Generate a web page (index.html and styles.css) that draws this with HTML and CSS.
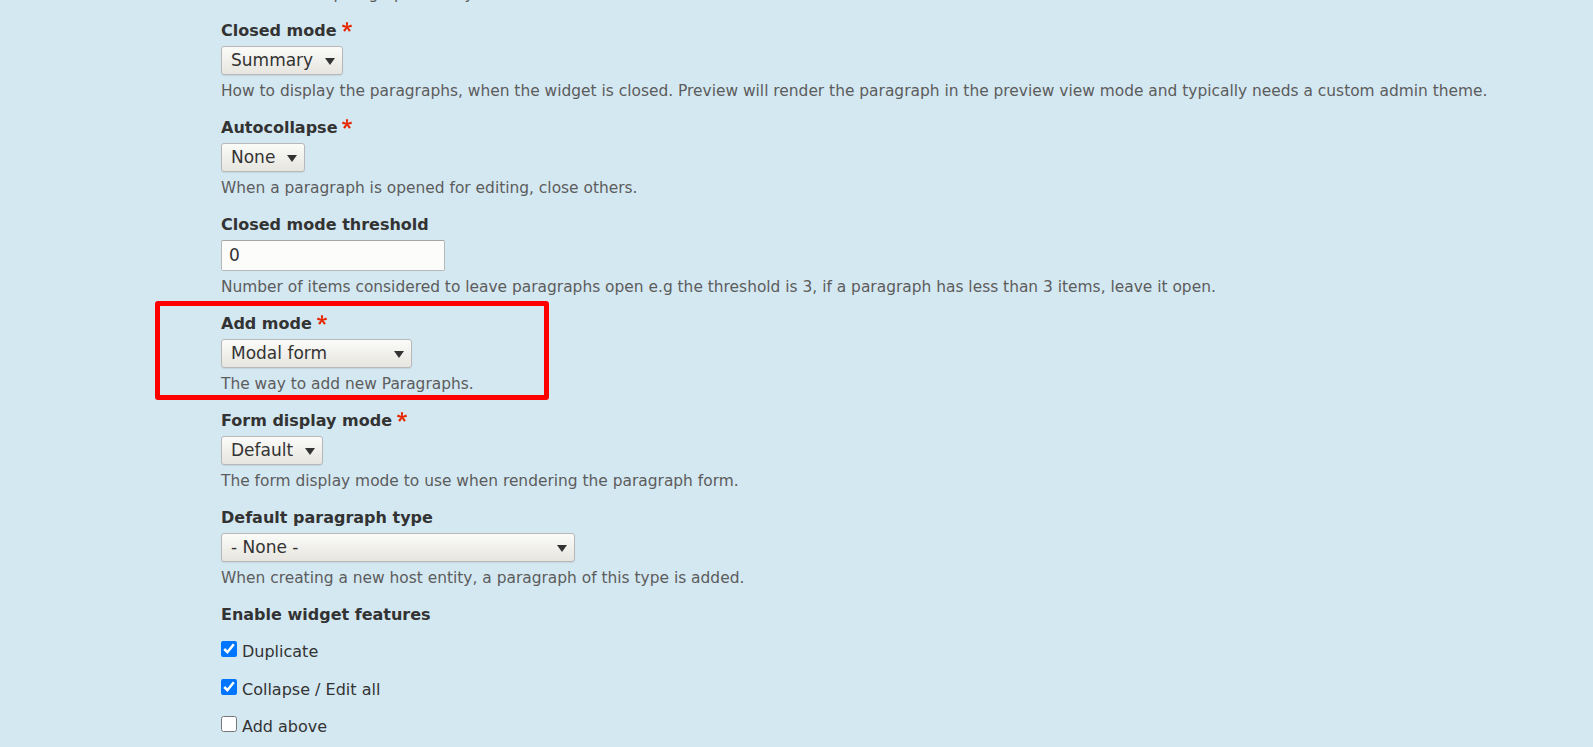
FILE: index.html
```html
<!DOCTYPE html>
<html lang="en">
<head>
<meta charset="utf-8">
<title>Paragraphs widget settings</title>
<link rel="stylesheet" href="styles.css">
</head>
<body>
<div class="settings">
  <div class="description lead">The mode the paragraph is in by default.</div>

  <div class="form-item">
    <label class="label">Closed mode<svg class="req" viewBox="0 0 16 16" aria-hidden="true"><path d="M0,7.562l1.114-3.438c2.565,0.906,4.43,1.688,5.59,2.35C6.398,3.553,6.237,1.544,6.22,0.447h3.511c-0.05,1.597-0.234,3.6-0.558,6.003c1.664-0.838,3.566-1.613,5.714-2.325l1.113,3.438c-2.050,0.678-4.060,1.131-6.028,1.356c0.984,0.856,2.372,2.381,4.166,4.575l-2.906,2.059c-0.935-1.274-2.041-3.009-3.316-5.206c-1.194,2.275-2.244,4.013-3.147,5.206l-2.856-2.059c1.872-2.307,3.211-3.832,4.017-4.575C3.862,8.675,1.891,8.227,0,7.562"/></svg></label>
    <span class="select-wrap"><select class="select"><option>Summary</option><option>Preview</option></select></span>
    <div class="description">How to display the paragraphs, when the widget is closed. Preview will render the paragraph in the preview view mode and typically needs a custom admin theme.</div>
  </div>

  <div class="form-item">
    <label class="label">Autocollapse<svg class="req" viewBox="0 0 16 16" aria-hidden="true"><path d="M0,7.562l1.114-3.438c2.565,0.906,4.43,1.688,5.59,2.35C6.398,3.553,6.237,1.544,6.22,0.447h3.511c-0.05,1.597-0.234,3.6-0.558,6.003c1.664-0.838,3.566-1.613,5.714-2.325l1.113,3.438c-2.050,0.678-4.060,1.131-6.028,1.356c0.984,0.856,2.372,2.381,4.166,4.575l-2.906,2.059c-0.935-1.274-2.041-3.009-3.316-5.206c-1.194,2.275-2.244,4.013-3.147,5.206l-2.856-2.059c1.872-2.307,3.211-3.832,4.017-4.575C3.862,8.675,1.891,8.227,0,7.562"/></svg></label>
    <span class="select-wrap"><select class="select"><option>None</option><option>All</option></select></span>
    <div class="description">When a paragraph is opened for editing, close others.</div>
  </div>

  <div class="form-item">
    <label class="label">Closed mode threshold</label>
    <input class="text-input" type="text" value="0">
    <div class="description">Number of items considered to leave paragraphs open e.g the threshold is 3, if a paragraph has less than 3 items, leave it open.</div>
  </div>

  <div class="form-item highlighted">
    <label class="label">Add mode<svg class="req" viewBox="0 0 16 16" aria-hidden="true"><path d="M0,7.562l1.114-3.438c2.565,0.906,4.43,1.688,5.59,2.35C6.398,3.553,6.237,1.544,6.22,0.447h3.511c-0.05,1.597-0.234,3.6-0.558,6.003c1.664-0.838,3.566-1.613,5.714-2.325l1.113,3.438c-2.050,0.678-4.060,1.131-6.028,1.356c0.984,0.856,2.372,2.381,4.166,4.575l-2.906,2.059c-0.935-1.274-2.041-3.009-3.316-5.206c-1.194,2.275-2.244,4.013-3.147,5.206l-2.856-2.059c1.872-2.307,3.211-3.832,4.017-4.575C3.862,8.675,1.891,8.227,0,7.562"/></svg></label>
    <span class="select-wrap"><select class="select select-add"><option>Modal form</option><option>Select list</option><option>Buttons</option><option>Dropdown button</option></select></span>
    <div class="description">The way to add new Paragraphs.</div>
  </div>

  <div class="form-item">
    <label class="label">Form display mode<svg class="req" viewBox="0 0 16 16" aria-hidden="true"><path d="M0,7.562l1.114-3.438c2.565,0.906,4.43,1.688,5.59,2.35C6.398,3.553,6.237,1.544,6.22,0.447h3.511c-0.05,1.597-0.234,3.6-0.558,6.003c1.664-0.838,3.566-1.613,5.714-2.325l1.113,3.438c-2.050,0.678-4.060,1.131-6.028,1.356c0.984,0.856,2.372,2.381,4.166,4.575l-2.906,2.059c-0.935-1.274-2.041-3.009-3.316-5.206c-1.194,2.275-2.244,4.013-3.147,5.206l-2.856-2.059c1.872-2.307,3.211-3.832,4.017-4.575C3.862,8.675,1.891,8.227,0,7.562"/></svg></label>
    <span class="select-wrap"><select class="select"><option>Default</option></select></span>
    <div class="description">The form display mode to use when rendering the paragraph form.</div>
  </div>

  <div class="form-item">
    <label class="label">Default paragraph type</label>
    <span class="select-wrap"><select class="select select-type"><option>- None -</option></select></span>
    <div class="description">When creating a new host entity, a paragraph of this type is added.</div>
  </div>

  <div class="form-item features">
    <div class="label">Enable widget features</div>
    <label class="check-row"><input class="check" type="checkbox" checked>Duplicate</label>
    <label class="check-row"><input class="check" type="checkbox" checked>Collapse / Edit all</label>
    <label class="check-row"><input class="check" type="checkbox">Add above</label>
  </div>
</div>
</body>
</html>
```

FILE: styles.css
```css
html, body {
  margin: 0;
  padding: 0;
  background: #d4e8f2;
  height: 100%;
  overflow: hidden;
}

body {
  font-family: "DejaVu Sans", "Liberation Sans", sans-serif;
  color: #333;
}

.settings {
  padding-left: 221px;
  margin-top: -16.2px;
}

.form-item {
  margin-bottom: 17px;
}

.label {
  display: block;
  font-size: 16px;
  line-height: 20px;
  font-weight: bold;
  color: #333;
  margin-bottom: 5px;
}

.req {
  width: 10px;
  height: 10px;
  fill: #e62600;
  margin-left: 5px;
  vertical-align: baseline;
  position: relative;
  top: -4px;
}

.select-wrap {
  position: relative;
  display: inline-block;
  vertical-align: top;
}

.select-wrap::after {
  content: "";
  position: absolute;
  right: 8px;
  top: 12px;
  width: 0;
  height: 0;
  border-left: 5.5px solid transparent;
  border-right: 5.5px solid transparent;
  border-top: 7px solid #333;
  pointer-events: none;
}

.select {
  -webkit-appearance: none;
  appearance: none;
  display: block;
  box-sizing: border-box;
  height: 29px;
  margin: 0;
  padding: 0 28px 0 9px;
  font-family: "DejaVu Sans", "Liberation Sans", sans-serif;
  font-size: 17px;
  color: #333;
  border: 1px solid #b8b8b8;
  border-radius: 3px;
  background: linear-gradient(#fbfbf9, #e6e5df);
  box-shadow: 0 1px 1px rgba(0, 0, 0, 0.08);
}

.select-add {
  width: 191px;
}

.select-type {
  width: 354px;
}

.text-input {
  display: block;
  box-sizing: border-box;
  width: 224px;
  height: 31px;
  margin: 3px 0 0;
  padding: 0 7px;
  font-family: "DejaVu Sans", "Liberation Sans", sans-serif;
  font-size: 17px;
  color: #333;
  background: #fcfcfa;
  border: 1px solid #b8b8b8;
  border-top-color: #a5a5a5;
  border-radius: 2px;
}

.description {
  font-size: 15.43px;
  line-height: 20px;
  color: #5c5c5c;
  margin-top: 6px;
}

.lead {
  margin-top: 0;
  margin-bottom: 17px;
}

.highlighted {
  position: relative;
}

.highlighted::before {
  content: "";
  position: absolute;
  left: -66px;
  top: -12.6px;
  width: 394px;
  height: 98.6px;
  box-sizing: border-box;
  border: 5px solid #ff0000;
  border-radius: 3px;
  pointer-events: none;
}

.features .label {
  margin-bottom: 16.3px;
}

.check-row {
  display: block;
  font-size: 16px;
  line-height: 20px;
  color: #333;
  margin-bottom: 16.5px;
}

.check {
  width: 16px;
  height: 16px;
  margin: 0 5px 0 0;
  vertical-align: baseline;
  accent-color: #0075ff;
}
```
